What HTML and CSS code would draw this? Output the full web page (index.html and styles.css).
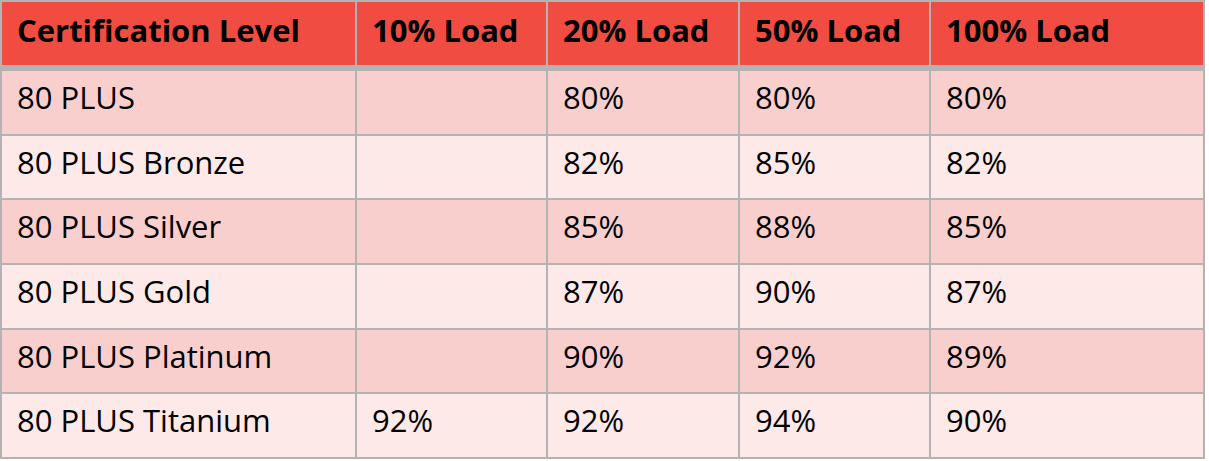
FILE: index.html
```html
<!DOCTYPE html>
<html>
<head>
<meta charset="utf-8">
<link rel="stylesheet" href="styles.css">
</head>
<body>
<table class="eff">
  <colgroup>
    <col class="c1"><col class="c2"><col class="c3"><col class="c4"><col class="c5">
  </colgroup>
  <thead>
    <tr><th>Certification Level</th><th>10% Load</th><th>20% Load</th><th>50% Load</th><th>100% Load</th></tr>
  </thead>
  <tbody>
    <tr class="dark"><td>80 PLUS</td><td></td><td>80%</td><td>80%</td><td>80%</td></tr>
    <tr class="light"><td>80 PLUS Bronze</td><td></td><td>82%</td><td>85%</td><td>82%</td></tr>
    <tr class="dark"><td>80 PLUS Silver</td><td></td><td>85%</td><td>88%</td><td>85%</td></tr>
    <tr class="light"><td>80 PLUS Gold</td><td></td><td>87%</td><td>90%</td><td>87%</td></tr>
    <tr class="dark"><td>80 PLUS Platinum</td><td></td><td>90%</td><td>92%</td><td>89%</td></tr>
    <tr class="light"><td>80 PLUS Titanium</td><td>92%</td><td>92%</td><td>94%</td><td>90%</td></tr>
  </tbody>
</table>
</body>
</html>
```

FILE: styles.css
```css
html, body {
  margin: 0;
  padding: 0;
  background: #ffffff;
}

.eff {
  border-collapse: separate;
  border-spacing: 0;
  table-layout: fixed;
  width: 1205px;
  border-top: 2px solid #b3b3b3;
  border-left: 2px solid #b3b3b3;
  font-family: "Open Sans", "Noto Sans", sans-serif;
  color: #000;
}

.c1 { width: 355px; }
.c2 { width: 191px; }
.c3 { width: 192px; }
.c4 { width: 191px; }
.c5 { width: 274px; }

.eff th,
.eff td {
  box-sizing: border-box;
  border-right: 2px solid #b3b3b3;
  border-bottom: 2px solid #b3b3b3;
  padding: 0 0 0 15px;
  text-align: left;
  vertical-align: top;
  white-space: nowrap;
}

.eff th {
  background: #f04c41;
  font-weight: 700;
  font-size: 31px;
  line-height: 40px;
  height: 69px;
  padding-top: 8px;
  border-bottom-width: 6px;
}

.eff td {
  font-size: 31px;
  line-height: 40px;
  height: 64.7px;
  padding-top: 6px;
}

.dark td { background: #f8cfcd; }
.light td { background: #fde9e8; }
```
